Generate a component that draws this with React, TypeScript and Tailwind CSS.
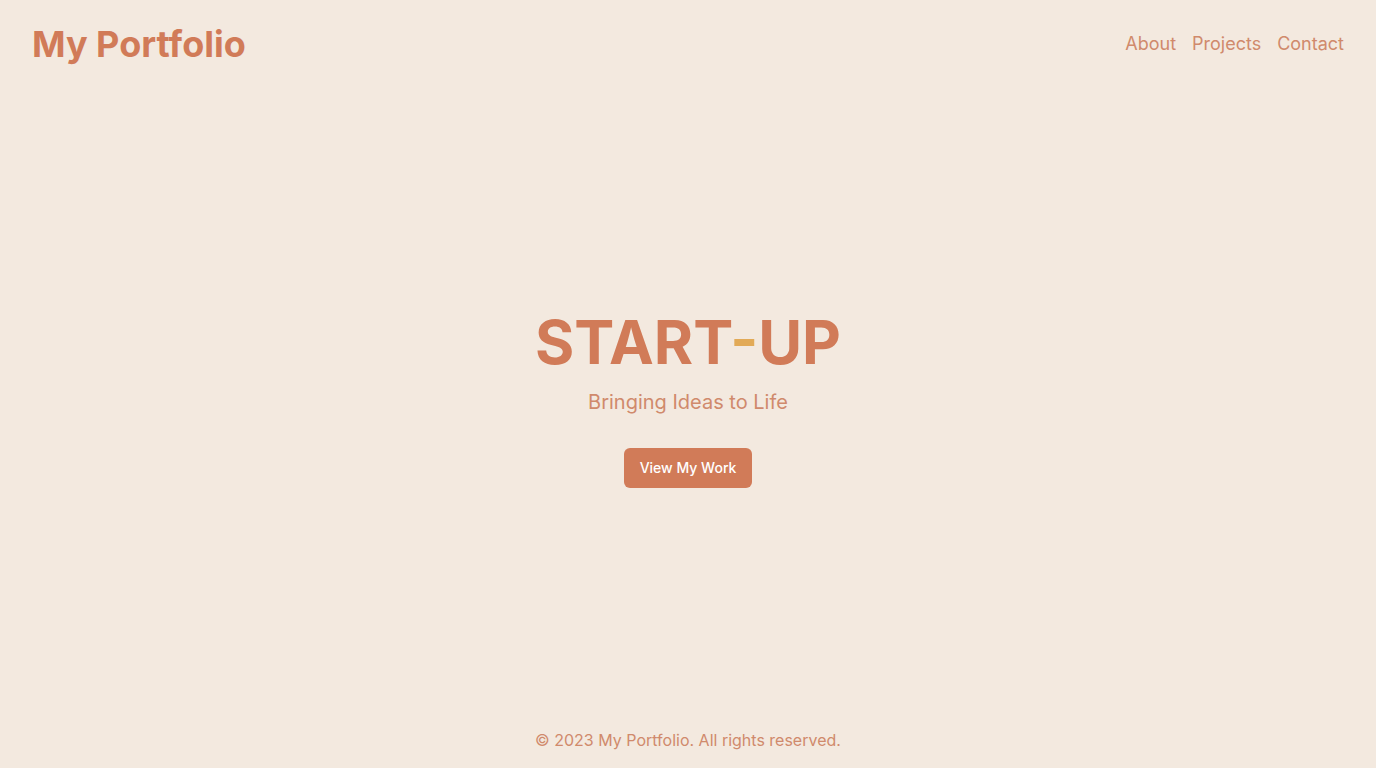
export default function App() {
  return (
    <div className="min-h-screen flex flex-col bg-[#f3e9df] text-[#d17b58] font-['Inter',sans-serif]">
      <header className="flex items-center justify-between px-8 py-6">
        <h1 className="text-4xl font-bold">My Portfolio</h1>
        <nav className="flex gap-4 text-lg text-[#d08a6c]">
          <a href="#about">About</a>
          <a href="#projects">Projects</a>
          <a href="#contact">Contact</a>
        </nav>
      </header>

      <main className="flex-1 flex flex-col items-center justify-center text-center">
        <h2 className="text-6xl font-bold">
          START<span className="text-[#e2aa57]">-</span>UP
        </h2>
        <p className="mt-4 text-xl text-[#d08a6c]">Bringing Ideas to Life</p>
        <button className="mt-8 px-4 py-2 h-10 rounded-md bg-[#d17b58] text-white text-sm font-medium">
          View My Work
        </button>
      </main>

      <footer className="py-4 text-center text-[#d08a6c]">
        © 2023 My Portfolio. All rights reserved.
      </footer>
    </div>
  );
}
